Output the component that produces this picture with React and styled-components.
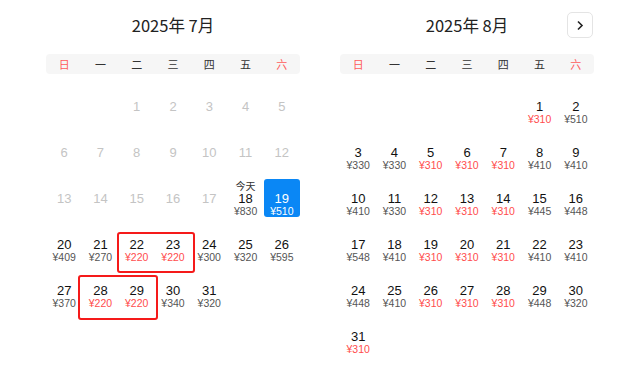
import React from "react";
import styled, { createGlobalStyle } from "styled-components";

const GlobalStyle = createGlobalStyle`
  body {
    margin: 0;
    background: #fff;
    font-family: "Liberation Sans", "Noto Sans CJK SC", sans-serif;
  }
`;

const WEEK = ["日", "一", "二", "三", "四", "五", "六"];

const july = {
  title: "2025年 7月",
  offset: 2,
  prices: {
    18: 830, 19: 510, 20: 409, 21: 270, 22: 220, 23: 220, 24: 300, 25: 320,
    26: 595, 27: 370, 28: 220, 29: 220, 30: 340, 31: 320,
  },
  today: 18,
  selected: 19,
  // annotation boxes drawn over the grid
  marks: [
    { left: 71, top: 145, width: 78, height: 41 },
    { left: 32, top: 188, width: 80, height: 45 },
  ],
};

const august = {
  title: "2025年 8月",
  offset: 5,
  prices: {
    1: 310, 2: 510, 3: 330, 4: 330, 5: 310, 6: 310, 7: 310, 8: 410, 9: 410,
    10: 410, 11: 330, 12: 310, 13: 310, 14: 310, 15: 445, 16: 448, 17: 548,
    18: 410, 19: 310, 20: 310, 21: 310, 22: 410, 23: 410, 24: 448, 25: 410,
    26: 310, 27: 310, 28: 310, 29: 448, 30: 320, 31: 310,
  },
  marks: [],
};

const Page = styled.div`
  display: flex;
  gap: 40px;
  padding-left: 46px;
  width: 640px;
  height: 375px;
  box-sizing: border-box;
`;

const Month = styled.div`
  width: 254px;
  display: flex;
  flex-direction: column;
`;

const Header = styled.div`
  display: grid;
  grid-template-columns: 27px 1fr 27px;
  align-items: center;
  height: 28px;
  margin-top: 11px;
`;

const Title = styled.div`
  grid-column: 2;
  text-align: center;
  font-family: "Noto Sans CJK SC", sans-serif;
  font-size: 16.5px;
  color: #222;
  line-height: 28px;
`;

const NextButton = styled.button`
  grid-column: 3;
  width: 26px;
  height: 26px;
  padding: 0;
  border: 1px solid #e4e4e4;
  border-radius: 5px;
  background: #fff;
  display: flex;
  align-items: center;
  justify-content: center;
  justify-self: start;
`;

const WeekBar = styled.div`
  display: grid;
  grid-template-columns: repeat(7, 1fr);
  height: 20px;
  margin-top: 15px;
  background: #f6f6f6;
  border-radius: 4px;
`;

const WeekDay = styled.span`
  text-align: center;
  line-height: 20px;
  font-family: "Noto Sans CJK SC", sans-serif;
  font-size: 11px;
  color: ${(p) => (p.$weekend ? "#ff5c5c" : "#333")};
`;

const Grid = styled.div`
  position: relative;
  display: grid;
  grid-template-columns: repeat(7, 1fr);
  grid-auto-rows: 38px;
  row-gap: 8px;
  margin-top: 13px;
`;

const Cell = styled.div`
  display: flex;
  flex-direction: column;
  align-items: center;
  padding-top: 1px;
  box-sizing: border-box;
  border-radius: 3px;
  background: ${(p) => (p.$selected ? "#0a87f5" : "transparent")};
  grid-column-start: ${(p) => p.$start || "auto"};
`;

const Label = styled.span`
  height: 12px;
  line-height: 12px;
  font-family: "Noto Sans CJK SC", sans-serif;
  font-size: 10px;
  color: #333;
`;

const Day = styled.span`
  line-height: 13px;
  font-size: 13px;
  color: ${(p) => (p.$selected ? "#fff" : p.$past ? "#c4c4c4" : "#111")};
`;

const Price = styled.span`
  line-height: 12px;
  font-size: 10.5px;
  color: ${(p) => (p.$selected ? "#fff" : p.$low ? "#ff4d4d" : "#555")};
`;

const Mark = styled.div`
  position: absolute;
  border: 2.5px solid #f51a1a;
  border-radius: 3px;
  box-sizing: border-box;
  pointer-events: none;
`;

const Chevron = () => (
  <svg width="8" height="11" viewBox="0 0 8 11">
    <path d="M2 1.5 L6 5.5 L2 9.5" fill="none" stroke="#222" strokeWidth="1.6" />
  </svg>
);

const MonthView = ({ data, withNext }) => {
  const values = Object.values(data.prices);
  const low = Math.min(...values);
  const days = Array.from({ length: 31 }, (_, i) => i + 1);

  return (
    <Month>
      <Header>
        <Title>{data.title}</Title>
        {withNext && (
          <NextButton>
            <Chevron />
          </NextButton>
        )}
      </Header>
      <WeekBar>
        {WEEK.map((w, i) => (
          <WeekDay key={w} $weekend={i === 0 || i === 6}>
            {w}
          </WeekDay>
        ))}
      </WeekBar>
      <Grid>
        {days.map((d) => {
          const price = data.prices[d];
          const selected = d === data.selected;
          return (
            <Cell key={d} $selected={selected} $start={d === 1 ? data.offset + 1 : null}>
              <Label>{d === data.today ? "今天" : ""}</Label>
              <Day $past={!price} $selected={selected}>
                {d}
              </Day>
              {price && (
                <Price $low={price === low} $selected={selected}>
                  ¥{price}
                </Price>
              )}
            </Cell>
          );
        })}
        {data.marks.map((m, i) => (
          <Mark key={i} style={{ left: m.left, top: m.top, width: m.width, height: m.height }} />
        ))}
      </Grid>
    </Month>
  );
};

export default function App() {
  return (
    <>
      <GlobalStyle />
      <Page>
        <MonthView data={july} />
        <MonthView data={august} withNext />
      </Page>
    </>
  );
}
